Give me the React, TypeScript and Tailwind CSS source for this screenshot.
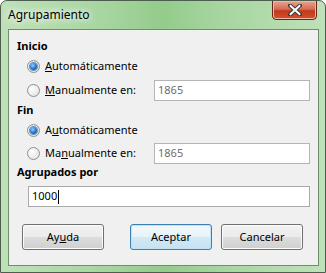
import React from 'react';

const Radio = ({ checked }: { checked?: boolean }) => (
  <span className="relative flex h-[13px] w-[13px] shrink-0 items-center justify-center rounded-full border border-[#8f8f8f] bg-[radial-gradient(circle_at_35%_35%,#ffffff,#dcdcdc)]">
    {checked && (
      <span className="h-[7px] w-[7px] rounded-full bg-[radial-gradient(circle_at_40%_35%,#8fd0ff,#1a6cc4_60%,#0f4f9a)] shadow-[0_0_0_1px_#5a8fc4]" />
    )}
  </span>
);

const Field = ({ value, disabled, caret }: { value: string; disabled?: boolean; caret?: boolean }) => (
  <div
    className={`flex h-[21px] items-center border bg-white pl-[3px] ${
      disabled ? 'border-[#b5b5b5] text-[#6d6d6d]' : 'border-[#a9a9a9] text-black'
    }`}
  >
    <span>{value}</span>
    {caret && <span className="ml-px h-[14px] w-px bg-black" />}
  </div>
);

const Button = ({ children, primary }: { children: React.ReactNode; primary?: boolean }) => (
  <button
    className={`flex h-[26px] w-[82px] items-center justify-center rounded-[3px] border text-black ${
      primary
        ? 'border-[#3c7fb1] bg-[linear-gradient(#f2f9fd_0%,#e7f3fa_50%,#d3e9f6_50%,#c7e1f1_100%)] shadow-[inset_0_0_0_1px_#bfe4f7]'
        : 'border-[#707070] bg-[linear-gradient(#f2f2f2_0%,#ebebeb_50%,#dddddd_50%,#cfcfcf_100%)] shadow-[inset_0_0_0_1px_#fcfcfc]'
    }`}
  >
    {children}
  </button>
);

export default function App() {
  return (
    <div
      className="relative h-[273px] w-[326px] overflow-hidden rounded-t-[7px] border border-[#4e5e4e] bg-[linear-gradient(90deg,#bfe1b9_0%,#a4d49d_35%,#93cc8b_50%,#a4d49d_65%,#bfe1b9_100%)] text-[11px] text-black"
      style={{ fontFamily: '"Noto Sans", "Segoe UI", sans-serif' }}
    >
      {/* title bar */}
      <div className="flex h-[28px] items-start justify-between pl-[7px] pr-[8px]">
        <span className="mt-[5px] text-[12px] [text-shadow:0_0_6px_#ffffff,0_0_10px_#ffffff]">Agrupamiento</span>
        <div className="-mt-px flex h-[20px] w-[45px] items-center justify-center rounded-b-[4px] border border-[#6b2418] bg-[linear-gradient(#e8a493_0%,#d46d55_45%,#c2381a_55%,#d1532f_100%)] shadow-[inset_0_0_0_1px_#efb8a8]">
          <svg width="14" height="12" viewBox="0 0 14 12">
            <path d="M2 1.5 L12 10.5 M12 1.5 L2 10.5" stroke="#3c3c3c" strokeWidth="4" strokeLinecap="square" />
            <path d="M2.6 2 L11.4 10 M11.4 2 L2.6 10" stroke="#ffffff" strokeWidth="2" strokeLinecap="square" />
          </svg>
        </div>
      </div>

      {/* client area */}
      <div className="ml-[7px] mr-[6px] flex h-[237px] flex-col border border-[#6f8f6b] bg-[#f0f0f0] pl-[8px] pr-[8px] pt-[8px]">
        <div className="flex h-[16px] items-center font-bold">Inicio</div>
        <div className="flex h-[24px] items-center gap-[5px] pl-[10px]">
          <Radio checked />
          <span>
            <u>A</u>utomáticamente
          </span>
        </div>
        <div className="flex h-[24px] items-center pl-[10px]">
          <div className="flex w-[127px] items-center gap-[5px]">
            <Radio />
            <span>
              <u>M</u>anualmente en:
            </span>
          </div>
          <div className="flex-1">
            <Field value="1865" disabled />
          </div>
        </div>

        <div className="flex h-[16px] items-center font-bold">Fin</div>
        <div className="flex h-[24px] items-center gap-[5px] pl-[10px]">
          <Radio checked />
          <span>
            A<u>u</u>tomáticamente
          </span>
        </div>
        <div className="flex h-[22px] items-center pl-[10px]">
          <div className="flex w-[127px] items-center gap-[5px]">
            <Radio />
            <span>
              Ma<u>n</u>ualmente en:
            </span>
          </div>
          <div className="flex-1">
            <Field value="1865" disabled />
          </div>
        </div>

        <div className="flex h-[16px] items-center font-bold">Agrupados por</div>
        <div className="mt-[6px] pl-[11px]">
          <Field value="1000" caret />
        </div>

        <div className="mt-[17px] flex items-center justify-between pl-[5px] pr-[7px]">
          <Button>
            Ay<u>u</u>da
          </Button>
          <div className="flex gap-[9px]">
            <Button primary>Aceptar</Button>
            <Button>Cancelar</Button>
          </div>
        </div>
      </div>
    </div>
  );
}
